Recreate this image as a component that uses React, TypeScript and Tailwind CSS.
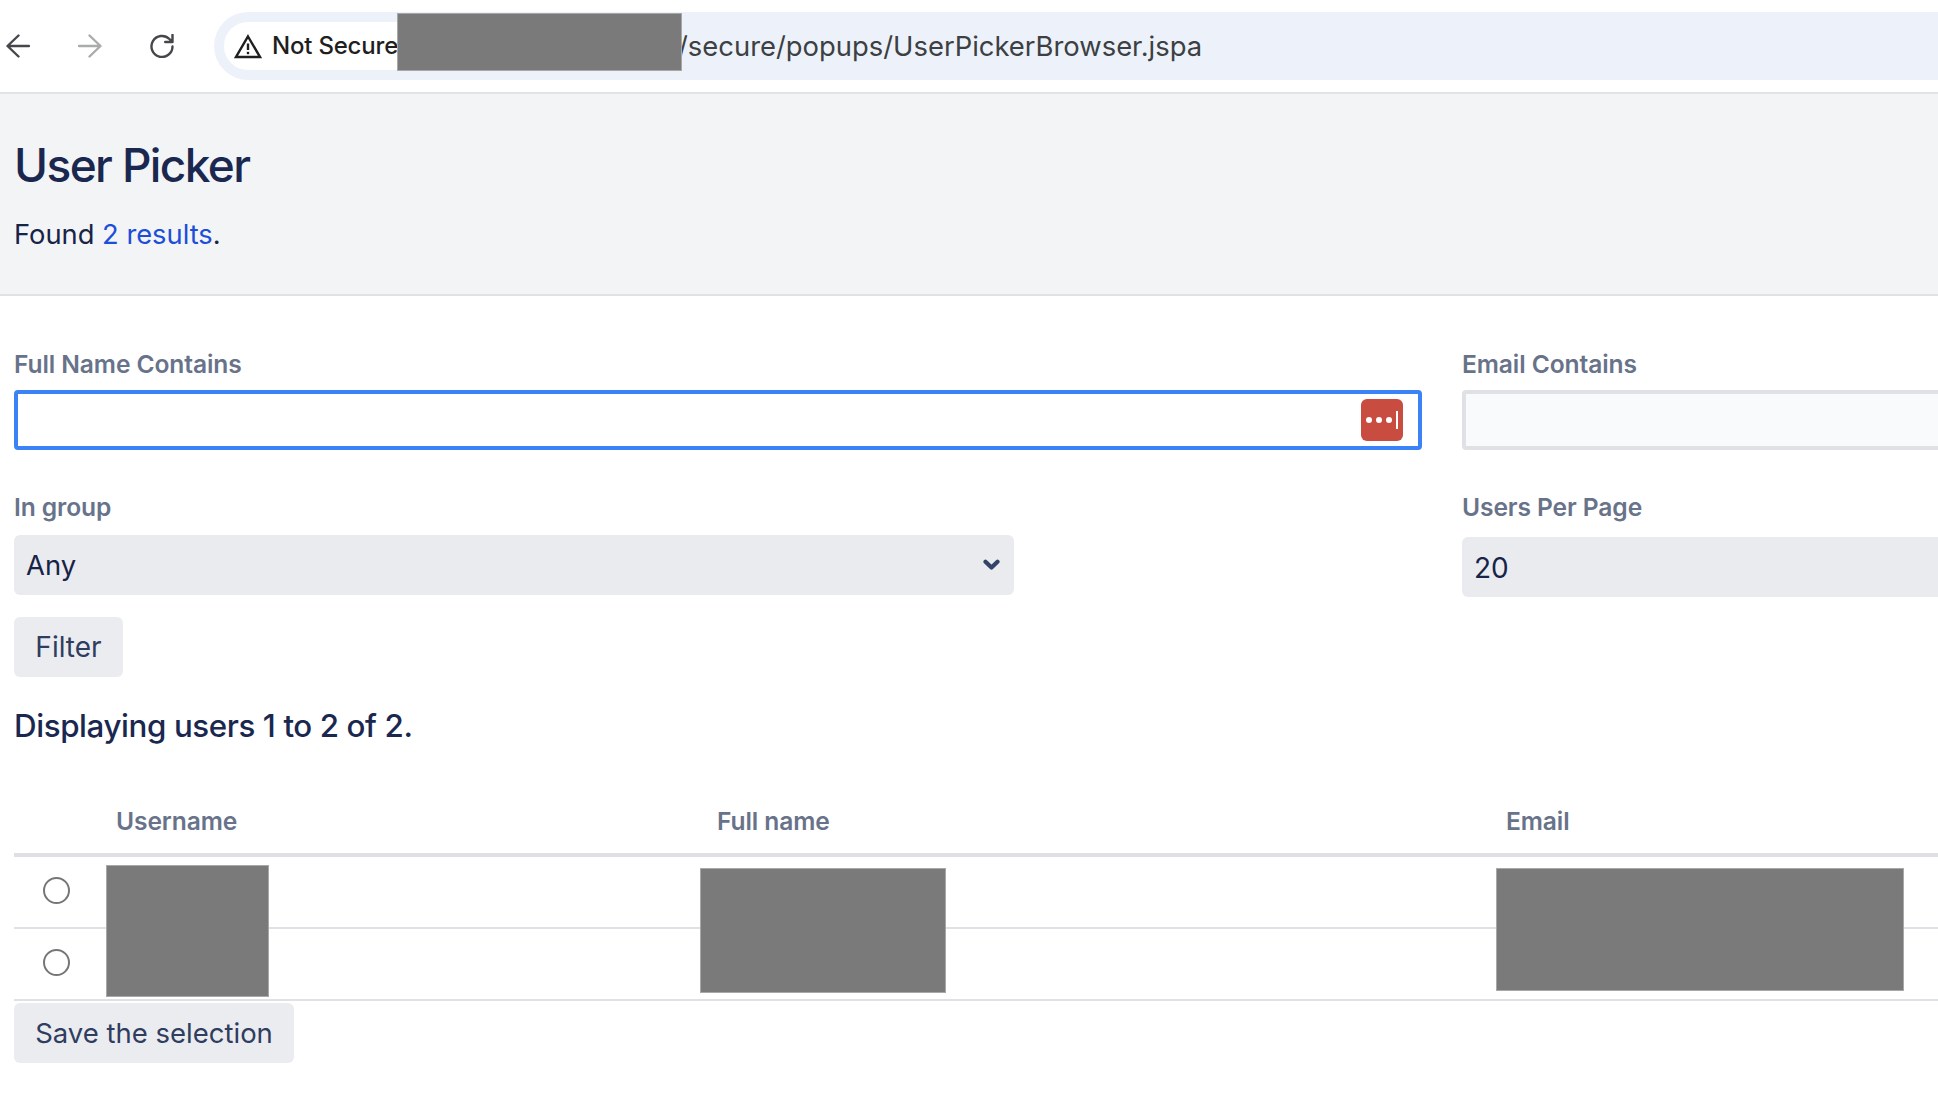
function Redaction({ className }: { className: string }) {
  return <div className={`absolute bg-[#7a7a7a] border border-[#a8a8a8] ${className}`} />;
}

function Label({ children }: { children: string }) {
  return <label className="block text-[24.6px] leading-[30px] font-semibold text-[#68738a] tracking-[-0.1px]">{children}</label>;
}

function NavIcon({ d, color }: { d: string; color: string }) {
  return (
    <svg width="24" height="24" viewBox="0 0 24 24" fill="none" className="shrink-0">
      <path d={d} stroke={color} strokeWidth="2.4" strokeLinecap="round" strokeLinejoin="round" />
    </svg>
  );
}

export default function App() {
  return (
    <div className="relative w-[1938px] h-[1094px] overflow-hidden bg-white font-['Inter',sans-serif] text-[#172347]">
      <header className="relative h-[94px] flex items-start border-b-2 border-[#e2e3e5] bg-white">
        <div className="flex items-center h-[92px] pl-[6px] gap-[48px]">
          <NavIcon d="M23 12H2M12.5 1.5L1.5 12L12.5 22.5" color="#45474a" />
          <NavIcon d="M1 12H22M11.5 1.5L22.5 12L11.5 22.5" color="#a9abad" />
          <NavIcon d="M22.5 12.5A10.5 10.5 0 1 1 19.4 5L22.5 8M22.5 0.8V8H15.2" color="#45474a" />
        </div>
        <div className="absolute left-[214px] top-[12px] right-0 h-[68px] rounded-l-[34px] bg-[#edf2fa] flex items-center pl-[10px]">
          <div className="flex items-center h-[48px] w-[300px] rounded-l-[24px] bg-white pl-[10px] gap-[10px]">
            <svg width="28" height="25" viewBox="0 0 28 25" fill="none" className="shrink-0">
              <path d="M14 2.5L26 23H2Z" stroke="#1f1f1f" strokeWidth="2.4" strokeLinejoin="miter" />
              <path d="M14 9.5V16" stroke="#1f1f1f" strokeWidth="2.4" />
              <path d="M14 17.8V20.2" stroke="#1f1f1f" strokeWidth="2.4" />
            </svg>
            <span className="text-[24px] font-medium text-[#1f1f1f] whitespace-nowrap tracking-[-0.2px]">Not Secure</span>
          </div>
          <span className="ml-[154px] mt-[1px] text-[27.4px] text-[#3c4043] whitespace-nowrap">/secure/popups/UserPickerBrowser.jspa</span>
        </div>
        <Redaction className="left-[397px] top-[13px] w-[285px] h-[58px]" />
      </header>

      <section className="h-[202px] bg-[#f3f4f6] border-b-2 border-[#e0e1e5] pl-[14px] pt-[43px]">
        <h1 className="text-[46px] leading-[56px] font-medium tracking-[-1.6px] text-[#1a2850]">User Picker</h1>
        <p className="mt-[24px] text-[27.3px] leading-[36px] text-[#172347]">
          Found <a className="text-[#1d4ed8]">2 results</a>.
        </p>
      </section>

      <main className="pl-[14px]">
        <div className="grid grid-cols-[1408px_1408px] gap-x-[40px] pt-[53px]">
          <div>
            <Label>Full Name Contains</Label>
            <div className="relative mt-[11px] h-[60px] rounded-[4px] border-[4px] border-[#3b82f6] bg-white">
              <div className="absolute right-[15px] top-[5px] w-[42px] h-[42px] rounded-[6px] bg-[#c94c40] flex items-center justify-center gap-[4px]">
                <span className="w-[6px] h-[6px] rounded-full bg-white" />
                <span className="w-[6px] h-[6px] rounded-full bg-white" />
                <span className="w-[6px] h-[6px] rounded-full bg-white" />
                <span className="w-[2px] h-[18px] bg-white" />
              </div>
            </div>
          </div>
          <div>
            <Label>Email Contains</Label>
            <div className="mt-[11px] h-[60px] rounded-[4px] border-[4px] border-[#e0e1e5] bg-[#f9fafc]" />
          </div>
          <div className="pt-[42px]">
            <Label>In group</Label>
            <div className="mt-[13px] w-[1000px] h-[60px] rounded-[6px] bg-[#e9ebef] flex items-center justify-between pl-[12px] pr-[14px]">
              <span className="text-[27.4px] mt-[1px]">Any</span>
              <svg width="17" height="12" viewBox="0 0 17 12" fill="none">
                <path d="M2.5 2.8 L8.5 8.6 L14.5 2.8" stroke="#344467" strokeWidth="4.2" strokeLinecap="round" strokeLinejoin="round" />
              </svg>
            </div>
          </div>
          <div className="pt-[42px]">
            <Label>Users Per Page</Label>
            <div className="mt-[15px] h-[60px] rounded-[6px] bg-[#e9ebef] flex items-center pl-[12px] text-[28px] text-[#172347]">
              <span className="mt-[1px]">20</span>
            </div>
          </div>
        </div>

        <button className="mt-[20px] block h-[60px] w-[109px] rounded-[6px] bg-[#ebecf0] text-[28px] text-[#2f3d5f]">Filter</button>
        <h2 className="mt-[29px] text-[31.3px] leading-[40px] font-medium tracking-[-0.4px] text-[#1a2850]">Displaying users 1 to 2 of 2.</h2>

        <div className="relative mt-[57px]">
          <div className="grid grid-cols-[88px_601px_789px_1fr] h-[54px] border-b-[4px] border-[#dfe0e6] pb-[20px] items-center text-[24.6px] font-semibold text-[#68738a] tracking-[-0.1px]">
            <span />
            <span className="pl-[14px]">Username</span>
            <span className="pl-[14px]">Full name</span>
            <span className="pl-[14px]">Email</span>
          </div>
          <div className="h-[72px] border-b-2 border-[#e0e1e6] pl-[29px] pb-[4px] flex items-center">
            <span className="block w-[27px] h-[27px] rounded-full border-2 border-[#767676] bg-white" />
          </div>
          <div className="h-[72px] border-b-2 border-[#e0e1e6] pl-[29px] pb-[4px] flex items-center">
            <span className="block w-[27px] h-[27px] rounded-full border-2 border-[#767676] bg-white" />
          </div>
          <Redaction className="left-[92px] top-[62px] w-[163px] h-[132px]" />
          <Redaction className="left-[686px] top-[65px] w-[246px] h-[125px]" />
          <Redaction className="left-[1482px] top-[65px] w-[408px] h-[123px]" />
        </div>

        <button className="mt-[2px] block h-[60px] w-[280px] rounded-[6px] bg-[#ebecf0] text-[27.5px] text-[#2f3d5f]">
          <span className="relative top-[1px]">Save the selection</span>
        </button>
      </main>
    </div>
  );
}
